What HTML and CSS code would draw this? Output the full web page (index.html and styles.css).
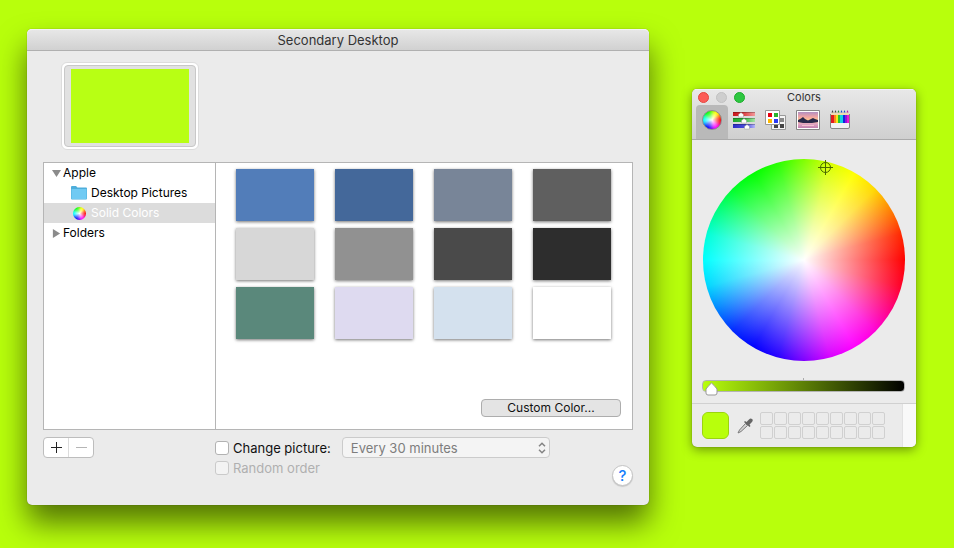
FILE: index.html
```html
<!DOCTYPE html>
<html lang="en">
<head>
<meta charset="utf-8">
<title>Secondary Desktop</title>
<link rel="stylesheet" href="styles.css">
</head>
<body>
<main class="desktop">
  <section class="window window-main" aria-labelledby="main-title">
    <header class="titlebar"><h1 id="main-title">Secondary Desktop</h1></header>
    <div class="content">
      <div class="preview"><div class="preview-fill"></div></div>
      <div class="browser">
        <ul class="tree">
          <li class="row"><svg class="arrow" viewBox="0 0 10 10"><path d="M0 1h10L5 9z"/></svg>Apple</li>
          <li class="row child">
            <svg class="row-icon" viewBox="0 0 16 16"><path d="M0 2q0-1 1-1h4l1.500 1.500h8.500q1 0 1 1V13q0 1.500-1 1.500H1Q0 14.500 0 13z" fill="#4eaedb"/><path d="M.5 4h15v9q0 1-.8 1H1.300Q.5 14 .5 13z" fill="#70caf3"/></svg>
            Desktop Pictures</li>
          <li class="row child selected"><span class="row-icon"><span class="hue mini"></span></span>Solid Colors</li>
          <li class="row"><svg class="arrow" viewBox="0 0 10 10"><path d="M1 0v10l8-5z"/></svg>Folders</li>
        </ul>
        <div class="gallery">
          <div class="swatches">
            <button class="swatch blue" aria-label="Blue"></button>
            <button class="swatch navy" aria-label="Navy"></button>
            <button class="swatch slate" aria-label="Slate"></button>
            <button class="swatch gray-dark" aria-label="Dark gray"></button>
            <button class="swatch gray-light" aria-label="Light gray"></button>
            <button class="swatch gray" aria-label="Gray"></button>
            <button class="swatch charcoal" aria-label="Charcoal"></button>
            <button class="swatch black" aria-label="Black"></button>
            <button class="swatch green" aria-label="Green"></button>
            <button class="swatch lavender" aria-label="Lavender"></button>
            <button class="swatch ice" aria-label="Ice blue"></button>
            <button class="swatch white" aria-label="White"></button>
          </div>
          <button class="custom">Custom Color...</button>
        </div>
      </div>
      <div class="controls">
        <div class="segmented">
          <button aria-label="Add"><svg viewBox="0 0 11 11"><path d="M5.500 0v11M0 5.500h11"/></svg></button>
          <button aria-label="Remove" disabled><svg viewBox="0 0 11 11"><path d="M0 5.500h11"/></svg></button>
        </div>
        <div class="options">
          <div class="option">
            <input type="checkbox" id="change"><label for="change">Change picture:</label>
            <div class="select-wrap">
              <select aria-label="Interval" disabled><option>Every 30 minutes</option></select>
              <svg class="chevrons" viewBox="0 0 8 12"><path d="M1 4.200l3-3 3 3M1 7.800l3 3 3-3"/></svg>
            </div>
          </div>
          <div class="option disabled">
            <input type="checkbox" id="random" disabled><label for="random">Random order</label>
          </div>
        </div>
        <button class="help" aria-label="Help">?</button>
      </div>
    </div>
  </section>

  <section class="window window-colors" aria-labelledby="colors-title">
    <header class="toolbar">
      <div class="toolbar-title">
        <div class="lights">
          <button class="light close" aria-label="Close"></button>
          <button class="light minimize" aria-label="Minimize" disabled></button>
          <button class="light zoom" aria-label="Zoom"></button>
        </div>
        <h2 id="colors-title">Colors</h2>
      </div>
      <nav class="tabs">
        <button class="tab active" aria-label="Color wheel"><span class="hue wheel-icon"></span></button>
        <button class="tab" aria-label="Color sliders">
          <svg width="24" height="20" viewBox="0 0 24 20">
            <defs>
              <linearGradient id="sr"><stop stop-color="#c8171d"/><stop offset=".35" stop-color="#d62b30"/><stop offset="1" stop-color="#f39a9a"/></linearGradient>
              <linearGradient id="sg"><stop stop-color="#1fa52d"/><stop offset=".5" stop-color="#35b941"/><stop offset="1" stop-color="#a5e6a5"/></linearGradient>
              <linearGradient id="sb"><stop stop-color="#2a2ac6"/><stop offset=".6" stop-color="#4e50dc"/><stop offset="1" stop-color="#b5b5fa"/></linearGradient>
            </defs>
            <path fill="url(#sr)" d="M1 2h22v4H1z"/><path fill="url(#sg)" d="M1 8h22v4H1z"/><path fill="url(#sb)" d="M1 14h22v4H1z"/>
            <path fill="none" stroke="#000" stroke-opacity=".25" d="M1 2.500h22M1 8.500h22M1 14.500h22"/>
            <g fill="#fff" stroke="#888" stroke-width=".4"><path d="M9 2.500l2.500 2V7h-5V4.500z"/><path d="M12 8.500l2.500 2V13h-5v-2.500z"/><path d="M15 14.500l2.500 2V19h-5v-2.500z"/></g>
          </svg>
        </button>
        <button class="tab" aria-label="Color palettes">
          <svg width="24" height="22" viewBox="0 0 24 22">
            <path fill="#f5f5f5" stroke="#999" d="M7.500 6.500h14v14h-14z"/>
            <path fill="#888" d="M16 9h4v4h-4z"/><path fill="#444" d="M16 15h4v4h-4z"/><path fill="#444" d="M10 15h4v4h-4z"/>
            <path fill="#fff" stroke="#999" d="M1.500 1.500h14v14h-14z"/>
            <path fill="#e60012" d="M4 4h4v4H4z"/><path fill="#29b52f" d="M10 4h4v4h-4z"/><path fill="#fdb900" d="M4 10h4v4H4z"/><path fill="#2a3af5" d="M10 10h4v4h-4z"/>
          </svg>
        </button>
        <button class="tab" aria-label="Image palettes">
          <svg width="24" height="20" viewBox="0 0 24 20">
            <defs><linearGradient id="sky" x2="0" y2="1"><stop stop-color="#b28fc0"/><stop offset=".3" stop-color="#f0a4a4"/><stop offset=".5" stop-color="#ffc58e"/><stop offset=".75" stop-color="#e3a6c4"/><stop offset="1" stop-color="#c17fae"/></linearGradient></defs>
            <path fill="#fff" stroke="#858585" d="M.5.5h23v19H.5z"/>
            <path fill="url(#sky)" d="M2 2h20v16H2z"/>
            <path fill="#29294a" d="M2 10l3-1.500L7 7l2 2 3 1.500 3-1.500 2-1 2 1 3 1v2l-6 1H7l-5-1z"/>
            <path stroke="#f3c2cf" d="M6 15.500h12"/>
          </svg>
        </button>
        <button class="tab" aria-label="Pencils">
          <svg width="22" height="20" viewBox="0 0 22 20">
            <path fill="#f1dcad" d="M2 5l1.500-4L5 4l1.500-3L8 4l1.500-3L11 4l1.500-3L14 4l1.500-3L17 4l1.500-3L20 5v1H2z"/>
            <path fill="#444" d="M2.500 2.500l1-2.500 1 2.500zM5.500 2.500l1-2.500 1 2.500z"/><path fill="#168b35" d="M8.500 2.500l1-2.500 1 2.500z"/><path fill="#174bcd" d="M11.500 2.500l1-2.500 1 2.500zM14.500 2.500l1-2.500 1 2.500z"/><path fill="#b416a7" d="M17.500 2.500l1-2.500 1 2.500z"/>
            <path fill="#e21a20" d="M2 5h3v9H2z"/><path fill="#f8881a" d="M5 5h2v9H5z"/><path fill="#f8e61a" d="M7 5h2v9H7z"/><path fill="#23c533" d="M9 5h2v9H9z"/><path fill="#16cfe0" d="M11 5h3v9h-3z"/><path fill="#1524e2" d="M14 5h2v9h-2z"/><path fill="#8a19dc" d="M16 5h2v9h-2z"/><path fill="#ee16d5" d="M18 5h2v9h-2z"/>
            <path fill="#f3f3f3" d="M2 13h18v5H2z"/>
            <path fill="none" stroke="#858585" d="M1.500 4v13q0 1.500 1.500 1.500h16q1.500 0 1.500-1.500V4"/>
          </svg>
        </button>
      </nav>
    </header>
    <div class="wheel-pane">
      <div class="hue wheel">
        <svg class="crosshair" viewBox="0 0 15 15"><circle cx="7.500" cy="7.500" r="5"/><path d="M7.500 0v15M0 7.500h15"/></svg>
      </div>
      <input class="brightness" type="range" min="0" max="100" value="0" aria-label="Brightness">
    </div>
    <footer class="palette">
      <input class="well" type="color" value="#b8ff0c" aria-label="Current color">
      <button class="picker" aria-label="Pick color from screen">
        <svg width="16" height="16" viewBox="0 0 16 16">
          <path fill="#d5d5d5" stroke="#7b7b7b" d="M8.500 5.500l2 2-6.500 6L1 15l1.500-3z"/>
          <path fill="#666" d="M7 4l1-1 1.500 1L12 1.500Q13.500 0 15 1t0 3L12.500 6.500l1 1.500-1 1z"/>
        </svg>
      </button>
      <div class="cells">
        <i></i><i></i><i></i><i></i><i></i><i></i><i></i><i></i><i></i>
        <i></i><i></i><i></i><i></i><i></i><i></i><i></i><i></i><i></i>
      </div>
      <div class="drawer"></div>
    </footer>
  </section>
</main>
</body>
</html>
```
FILE: styles.css
```css
* { box-sizing: border-box; }

body {
  margin: 0;
  min-height: 100vh;
  background: #b8ff0c;
  color: #111;
  font: 13px/20px Inter, "Liberation Sans", sans-serif;
}

h1, h2 { margin: 0; font-size: 13px; font-weight: 400; text-align: center; color: #333; }
button, input, select { margin: 0; padding: 0; border: 0; font: inherit; color: inherit; }
svg { display: block; }

.desktop {
  display: flex;
  align-items: flex-start;
  gap: 43px;
  min-height: 100vh;
  padding: 29px 38px 43px 27px;
  overflow: hidden;
}

.window { background: #ebebeb; border-radius: 5px; }

.window-main {
  flex: 1;
  box-shadow: 0 0 1px rgba(0, 0, 0, .5), 0 18px 30px rgba(0, 0, 0, .55);
}

.titlebar {
  height: 22px;
  border-bottom: 1px solid #b0b0b0;
  border-radius: 5px 5px 0 0;
  background: linear-gradient(#e8e8e8, #d1d1d1);
  box-shadow: inset 0 1px #f3f3f3;
}
.titlebar h1 { line-height: 23px; }

.content { padding: 11px 16px 19px; }

.preview {
  width: 138px;
  height: 88px;
  margin-left: 18px;
  padding: 2px;
  border: 1px solid #dcdcdc;
  border-radius: 6px;
  background: #fff;
}
.preview-fill {
  height: 100%;
  border: 1px solid #c8c8c8;
  border-radius: 4px;
  padding: 3px 6px;
  background: linear-gradient(#b8ff14, #b8ff14) content-box, #e1e1e1;
}

.browser {
  display: flex;
  height: 268px;
  margin-top: 12px;
  border: 1px solid #b5b5b5;
  background: #fff;
}

.tree {
  flex: 0 0 172px;
  margin: 0;
  padding: 0;
  list-style: none;
  border-right: 1px solid #b5b5b5;
  color: #000;
  font-size: 12px;
}
.row { display: flex; align-items: center; height: 20px; padding-left: 8px; gap: 2px; }
.row.child { padding-left: 27px; gap: 4px; }
.row.selected { background: #dcdcdc; color: #fff; }
.arrow { width: 9px; height: 9px; fill: #8b8b8b; }
.row-icon { display: grid; place-items: center; width: 16px; height: 16px; }

.hue {
  border-radius: 50%;
  background:
    radial-gradient(closest-side, #fff, rgba(255, 255, 255, 0)),
    conic-gradient(from 90deg,
      #f00, #ff0028 15deg, #ff00d7 45deg,
      #f0f 60deg, #d700ff 75deg, #2800ff 105deg,
      #00f 120deg, #0028ff 135deg, #00d7ff 165deg,
      #0ff 180deg, #00ffd7 195deg, #00ff28 225deg,
      #0f0 240deg, #28ff00 255deg, #d7ff00 285deg,
      #ff0 300deg, #ffd700 315deg, #ff2800 345deg, #f00);
}
.mini { width: 13px; height: 13px; }

.gallery {
  flex: 1;
  display: flex;
  flex-direction: column;
  justify-content: space-between;
  padding: 6px 11px 12px 20px;
}
.swatches { display: grid; grid-template-columns: repeat(auto-fill, 78px); gap: 7px 21px; }
.swatch { height: 52px; box-shadow: 0 1px 3px rgba(0, 0, 0, .55); }
.blue { background: #527db9; }
.navy { background: #44689a; }
.slate { background: #788598; }
.gray-dark { background: #5f5f5f; }
.gray-light { background: #d7d7d7; }
.gray { background: #919191; }
.charcoal { background: #4a4a4a; }
.black { background: #2d2d2d; }
.green { background: #5a887b; }
.lavender { background: #dedaf0; }
.ice { background: #d4e1ee; }
.white { background: #fff; }

.custom {
  align-self: flex-end;
  width: 140px;
  height: 18px;
  border: 1px solid #adadad;
  border-radius: 4px;
  background: #e4e4e4;
  font-size: 12px;
  line-height: 16px;
}

.controls { display: flex; align-items: flex-start; padding-top: 7px; }
.segmented {
  display: grid;
  grid-template-columns: 24px 25px;
  height: 21px;
  border: 1px solid #bdbdbd;
  border-radius: 4px;
  background: #fff;
}
.segmented button { display: grid; place-items: center; background: none; }
.segmented button + button { border-left: 1px solid #dcdcdc; }
.segmented svg { width: 11px; height: 11px; fill: none; stroke: #222; }
.segmented button:disabled svg { stroke: #b5b5b5; }

.options { flex: 1; margin-left: 121px; }
.option { display: flex; align-items: center; height: 20px; }
.option:first-child { height: 21px; }
.option input {
  appearance: none;
  width: 14px;
  height: 14px;
  border: 1px solid #b2b2b2;
  border-radius: 3px;
  background: #fff;
}
.option label { margin-left: 4px; }
.option.disabled { color: #b0b0b0; }
.option.disabled input { border-color: #cacaca; background: #f3f3f3; }

.select-wrap { position: relative; width: 208px; margin-left: 11px; }
.select-wrap select {
  display: block;
  appearance: none;
  width: 100%;
  height: 21px;
  padding: 0 24px 0 8px;
  border: 1px solid #cbcbcb;
  border-radius: 4px;
  background: #f4f4f4;
  color: #7d7d7d;
  opacity: 1;
}
.chevrons {
  position: absolute;
  top: 5px;
  right: 4px;
  width: 8px;
  height: 12px;
  fill: none;
  stroke: #858585;
  stroke-width: 1.5;
  pointer-events: none;
}

.help {
  width: 21px;
  height: 21px;
  margin-top: 28px;
  border: 1px solid #c4c4c4;
  border-radius: 50%;
  background: #fff;
  box-shadow: 0 1px 1px rgba(0, 0, 0, .15);
  color: #147efb;
  font-size: 15px;
  font-weight: 500;
  line-height: 19px;
}

.window-colors {
  flex: 0 0 224px;
  margin-top: 60px;
  overflow: hidden;
  box-shadow: 0 0 1px rgba(0, 0, 0, .5), 0 3px 11px rgba(0, 0, 0, .4);
}
.toolbar {
  height: 51px;
  border-bottom: 1px solid #aaa;
  background: linear-gradient(#e8e8e8, #cfcfcf);
  box-shadow: inset 0 1px #f3f3f3;
}
.toolbar-title { display: grid; grid-template-columns: 1fr auto 1fr; height: 16px; padding: 0 6px; }
.toolbar-title h2 { font-size: 11px; line-height: 17px; }
.lights { display: flex; align-items: center; gap: 7px; }
.light { width: 11px; height: 11px; border: 1px solid #c1c1c1; border-radius: 50%; background: #cecece; }
.close { border-color: #e2463f; background: #fc5b57; }
.zoom { border-color: #1dad2b; background: #2dc740; }
.tabs { display: flex; padding-left: 4px; }
.tab { display: grid; place-items: center; width: 32px; height: 34px; padding-bottom: 4px; background: none; }
.tab.active { border-radius: 4px 4px 0 0; background: #b9b9b9; }
.wheel-icon { width: 20px; height: 20px; border: 1px solid #8d8d8d; }

.wheel-pane { padding: 19px 11px 9px 10px; }
.wheel { position: relative; width: 202px; height: 202px; margin: 0 auto; }
.crosshair {
  position: absolute;
  left: 57%;
  top: 1px;
  width: 15px;
  height: 15px;
  fill: none;
  stroke: #4b6a00;
}

.brightness {
  display: block;
  appearance: none;
  width: 100%;
  height: 16px;
  margin-top: 17px;
  background: linear-gradient(#aaa, #aaa) 50% 0 / 1px 2px no-repeat;
}
.brightness::-webkit-slider-runnable-track {
  height: 12px;
  padding-left: 1px;
  border: 1px solid #b4b4b4;
  border-radius: 4px;
  background: linear-gradient(90deg, #b8ff0c, #000);
}
.brightness::-webkit-slider-thumb {
  appearance: none;
  width: 15px;
  height: 14px;
  margin-top: 1px;
  background: url("data:image/svg+xml,%3Csvg xmlns='http://www.w3.org/2000/svg' width='15' height='14'%3E%3Cpath d='M7.500 1Q10 3 13 7v4q0 2-2 2H4q-2 0-2-2V7q3-4 5.500-6z' fill='white' stroke='%23999'/%3E%3C/svg%3E") no-repeat;
}

.palette { display: flex; align-items: flex-start; height: 44px; padding-left: 10px; border-top: 1px solid #d0d0d0; }
.well { appearance: none; width: 27px; height: 27px; margin-top: 8px; border: 1px solid #9bd40e; border-radius: 6px; background: #b8ff0c; }
.well::-webkit-color-swatch-wrapper { padding: 0; }
.well::-webkit-color-swatch { border: 0; border-radius: 5px; }
.picker { margin: 14px 7px 0 8px; background: none; }
.cells { display: grid; grid-template-columns: repeat(9, 13px); gap: 1px; margin: 8px auto 0 0; }
.cells i { height: 13px; border: 1px solid #d0d0d0; border-radius: 2px; }
.drawer { align-self: stretch; width: 14px; border-left: 1px solid #e2e2e2; background: #f9f9f9; }
```
